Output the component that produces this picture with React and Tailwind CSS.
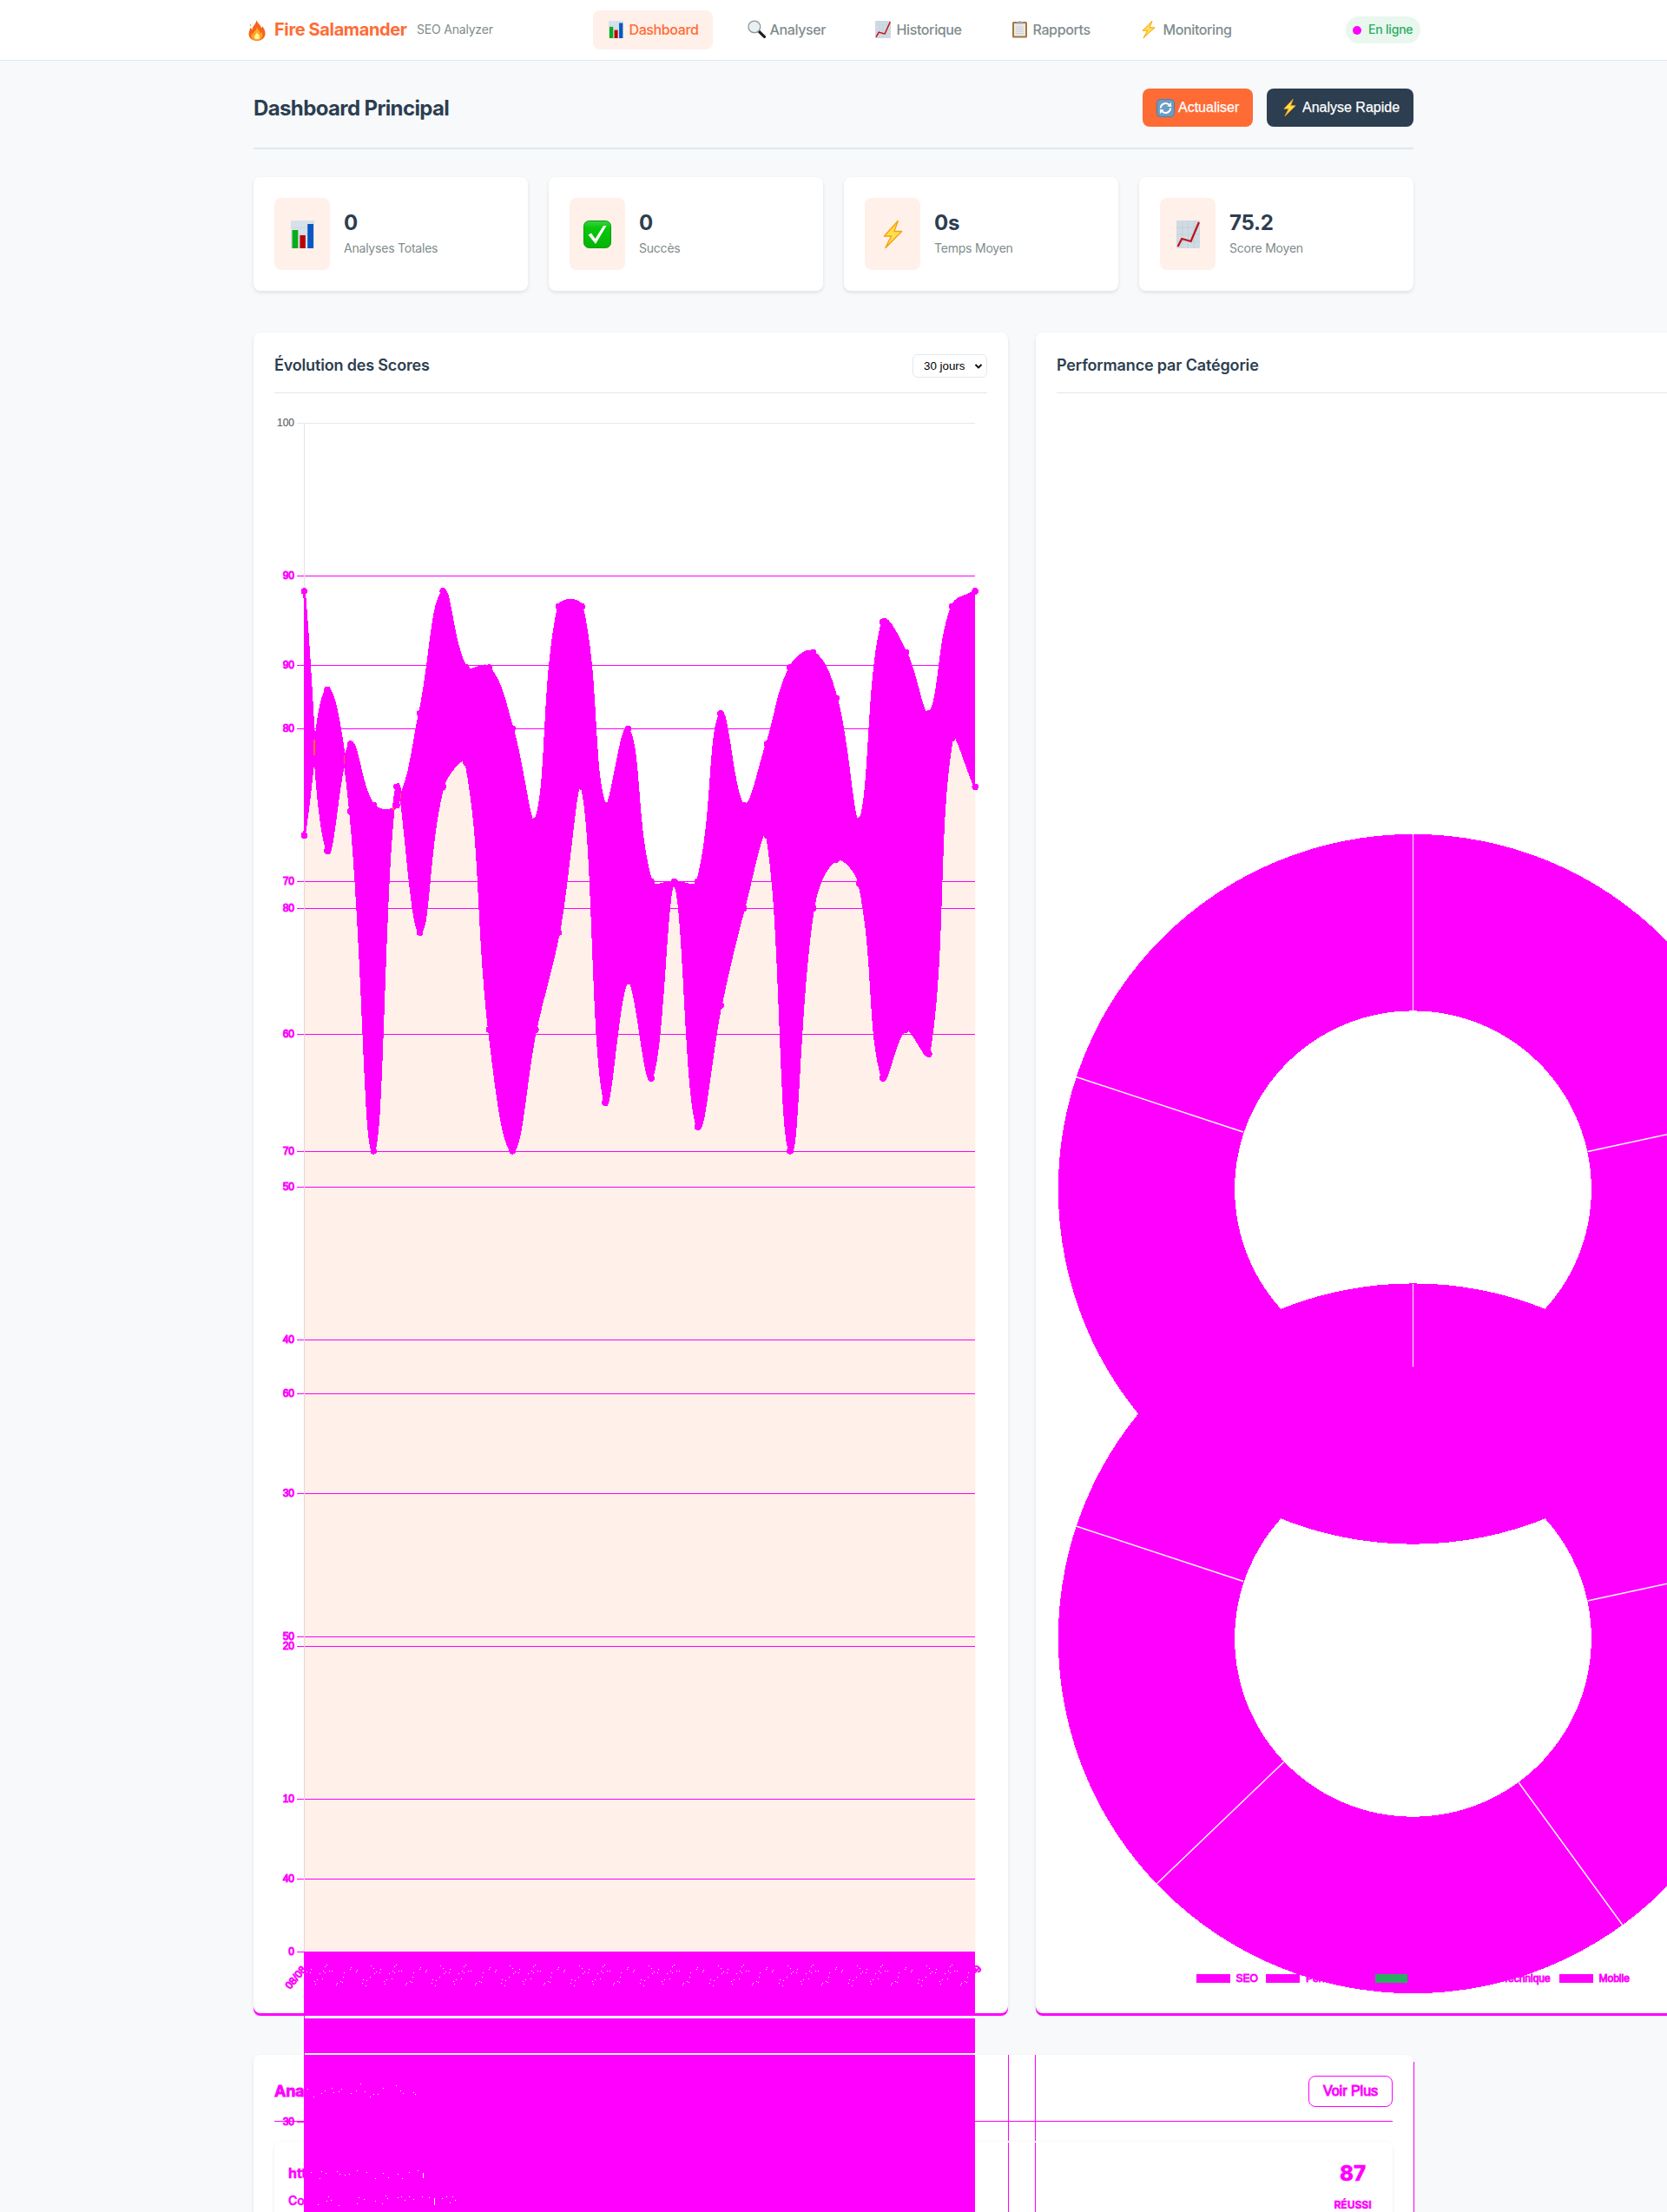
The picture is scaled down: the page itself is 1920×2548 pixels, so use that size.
import React from "react";

const M = "#ff00ff";

/* ---------- icons ---------- */
function BarsIcon({ className }) {
  return (
    <svg viewBox="0 0 26 32" preserveAspectRatio="none" className={className}>
      <rect width="26" height="32" fill="#d6e1ea" />
      <path d="M0 8h26M0 16h26M0 24h26" stroke="#c5d3de" strokeWidth="0.6" />
      <rect x="1.500" y="11" width="6.500" height="21" fill="#0bab1b" />
      <rect x="10" y="17" width="6.200" height="15" fill="#b90504" />
      <rect x="18.500" y="4" width="6.500" height="28" fill="#0a56c2" />
    </svg>
  );
}
function TrendIcon({ className }) {
  return (
    <svg viewBox="0 0 26 32" preserveAspectRatio="none" className={className}>
      <rect width="26" height="32" fill="#d0dbe3" />
      <path d="M6.500 0v32M13 0v32M19.500 0v32M0 8h26M0 16h26M0 24h26" stroke="#c0cdd7" strokeWidth="0.7" />
      <path d="M1.500 30 6 21l10 3L25 2" fill="none" stroke="#c1121a" strokeWidth="2.200" />
    </svg>
  );
}
function BoltIcon({ className }) {
  return (
    <svg viewBox="0 0 24 32" preserveAspectRatio="none" className={className}>
      <path d="M18 .5 1.500 18H10L3 31.500 22.500 12.500H13.500Z" fill="#ffe14d" stroke="#f5a013" strokeWidth="1.500" strokeLinejoin="round" />
    </svg>
  );
}
function CheckIcon({ className }) {
  return (
    <svg viewBox="0 0 32 32" className={className}>
      <defs>
        <linearGradient id="ck" x1="0" y1="0" x2="0" y2="1">
          <stop offset="0" stopColor="#3fcf4a" />
          <stop offset="0.250" stopColor="#08c90b" />
          <stop offset="1" stopColor="#05b306" />
        </linearGradient>
      </defs>
      <rect x="0.500" y="0.500" width="31" height="31" rx="6" fill="url(#ck)" stroke="#079c0c" />
      <path d="M5.500 16.500 9 14.500l4.500 6.500L23 6h3.500L14 27Z" fill="#fff" />
    </svg>
  );
}
function LensIcon({ className }) {
  return (
    <svg viewBox="0 0 20 20" className={className}>
      <path d="m12 12 6.500 6.500" stroke="#1e1e1e" strokeWidth="3" strokeLinecap="round" />
      <circle cx="7.500" cy="7.500" r="6.500" fill="#e8f0f3" stroke="#8e9598" strokeWidth="1.200" />
    </svg>
  );
}
function ClipIcon({ className }) {
  return (
    <svg viewBox="0 0 18 21" className={className}>
      <rect x="0.500" y="2" width="17" height="18.500" rx="1.500" fill="#a5763f" />
      <rect x="2.500" y="4" width="13" height="14.500" fill="#e9e9e9" />
      <path d="M4.500 8h9M4.500 10.500h9M4.500 13h9M4.500 15.500h9" stroke="#c4c4c4" strokeWidth="0.800" />
      <path d="M5 4.500V2.500h2.500a1.500 1.500 0 0 1 3 0H13v2Z" fill="#9aa3a8" />
    </svg>
  );
}
function FlameIcon({ className }) {
  return (
    <svg viewBox="0 0 20 24" className={className}>
      <path d="M9.500 0c1 4 5 5.500 5.500 9.500.5-.5 1-1.500 1-2.500 2 2.500 4 6 3.500 9.500C19 21 15 24 10 24S.5 21 .5 16.500C.5 13 2 11 2.500 9c1 .5 1.500 1.500 2 2.500C4.500 7 9 5 9.500 0Z" fill="#f7641b" />
      <path d="M10 8c.5 3 4 4.500 4 8 1-.5 1.200-1.500 1.500-2.500 2.500 5-.5 10-5.500 10S2 19.500 4 15c.5 1 1 1.500 1.500 1.500C6 13 10 12 10 8Z" fill="#ffab22" />
      <path d="M10 14c.5 2.500 3.500 3.500 3 6.500-.5 2-5.500 2-6 0-.5-3 2.500-3.500 3-6.500Z" fill="#fff3a0" />
      <circle cx="2.500" cy="6" r="0.800" fill="#f7641b" />
    </svg>
  );
}
function RefreshIcon({ className }) {
  return (
    <svg viewBox="0 0 21 21" className={className}>
      <rect x="0.500" y="0.500" width="20" height="20" rx="4" fill="#6b9cc4" stroke="#4f7fa8" />
      <g fill="none" stroke="#fff" strokeWidth="2">
        <path d="M4.800 10.500a5.700 5.700 0 0 1 9.500-4" />
        <path d="M16.200 10.500a5.700 5.700 0 0 1-9.500 4" />
      </g>
      <path d="m12.300 8.500 5 .4-.6-5ZM8.700 12.500l-5-.4.6 5Z" fill="#fff" />
    </svg>
  );
}

/* ---------- line chart ---------- */
const scoreA = [89, 72, 79, 75, 75, 81, 89, 84, 84, 80, 74, 88, 88, 75, 80, 70, 70, 70, 81, 75, 79, 84, 85, 82, 74, 87, 85, 81, 88, 89];
const scoreB = [83, 89, 84, 70, 85, 79, 85, 86, 75, 70, 75, 79, 85, 72, 77, 73, 81, 71, 76, 80, 83, 70, 80, 82, 81, 73, 75, 74, 87, 85];
const px = (i) => 350.3 + (i * 772.9) / 29;
const yA = (v) => 2248.3 - v * 17.61;
const yB = (v) => 766.5 + (90 - v) * 27.97;
const ptsA = scoreA.map((v, i) => [px(i), yA(v)]);
const ptsB = scoreB.map((v, i) => [px(i), yB(v)]);

function spline(p) {
  const t = 0.4;
  const n = p.length;
  const cps = p.map((c, i) => {
    const a = p[Math.max(0, i - 1)];
    const b = p[Math.min(n - 1, i + 1)];
    const d1 = Math.hypot(c[0] - a[0], c[1] - a[1]);
    const d2 = Math.hypot(b[0] - c[0], b[1] - c[1]);
    const fa = (t * d1) / (d1 + d2);
    const fb = (t * d2) / (d1 + d2);
    return [
      [c[0] - fa * (b[0] - a[0]), c[1] - fa * (b[1] - a[1])],
      [c[0] + fb * (b[0] - a[0]), c[1] + fb * (b[1] - a[1])],
    ];
  });
  const seg = (q) => q.map((v) => v.toFixed(2)).join(" ");
  let fwd = "";
  let back = "";
  for (let i = 1; i < n; i++) fwd += ` C${seg(cps[i - 1][1])} ${seg(cps[i][0])} ${seg(p[i])}`;
  for (let i = n - 1; i > 0; i--) back += ` C${seg(cps[i][0])} ${seg(cps[i - 1][1])} ${seg(p[i - 1])}`;
  return { fwd, back, start: seg(p[0]), end: seg(p[n - 1]) };
}
const sA = spline(ptsA);
const sB = spline(ptsB);
const areaA = `M${sA.start}${sA.fwd} V2248 H350.3Z`;
const areaB = `M${sB.start}${sB.fwd} V2248 H350.3Z`;
const between = `M${sA.start}${sA.fwd} L${sB.end}${sB.back}Z`;

const ticks = [
  [90, 663], [90, 766], [80, 839], [70, 1015], [80, 1046], [60, 1191], [70, 1326], [50, 1367],
  [40, 1543], [60, 1605], [30, 1720], [50, 1885], [20, 1896], [10, 2072], [40, 2164], [0, 2248], [30, 2444],
];
const dates = Array.from({ length: 30 }, (_, i) => {
  const d = i + 8;
  return d <= 31 ? `${String(d).padStart(2, "0")}/08` : `${String(d - 31).padStart(2, "0")}/09`;
});

const labelSpecks = [
  [[-3, 2], [0, 5], [3, 9], [8, 6], [7, 10], [1, 11], [-8, 19], [-12, 18], [-4, 15], [-9, 25], [-13, 22]],
  [[-1, 1], [-3, 3], [-5, 8], [-3, 10], [2, 8], [5, 8], [-9, 11], [-6, 17], [-12, 18], [-15, 20], [-14, 23]],
  [[0, 4], [-1, 6], [7, 7], [6, 9], [-8, 10], [-9, 15], [-12, 20], [-16, 22], [-10, 21], [-17, 24]],
];
const textSpecks = [
  [354, 2406], [361, 2415], [370, 2411], [374, 2408], [382, 2405], [384, 2410], [390, 2409], [393, 2406], [404, 2411], [410, 2408],
  [415, 2400], [420, 2409], [426, 2415], [430, 2412], [435, 2412], [441, 2405], [456, 2402], [461, 2408], [464, 2411], [476, 2410], [478, 2412],
  [358, 2502], [368, 2509], [370, 2501], [375, 2503], [388, 2501], [391, 2504], [397, 2505], [402, 2504], [411, 2500], [422, 2502],
  [432, 2509], [441, 2503], [447, 2508], [458, 2504], [463, 2509], [471, 2502], [481, 2500],
  [366, 2539], [376, 2535], [378, 2530], [381, 2534], [390, 2540], [411, 2538], [413, 2531], [419, 2533], [432, 2535], [440, 2538],
  [444, 2529], [446, 2532], [458, 2531], [462, 2530], [466, 2534], [471, 2530], [476, 2533], [486, 2530], [494, 2531], [509, 2532],
  [514, 2530], [518, 2537], [521, 2530], [524, 2534],
];

function ScoreChart() {
  return (
    <svg viewBox="316 477 821 1818" width="821" height="1818" className="relative z-10 mt-6 block overflow-visible">
      <g shapeRendering="crispEdges">
        <rect x="342" y="487" width="781" height="1" fill="#e1e8ed" />
        <rect x="350" y="487" width="1" height="1761" fill="#e5e5e5" />
      </g>
      <path d={areaA} fill="#fff0e9" />
      <path d={areaB} fill="#fff0e9" />
      <rect x="350" y="962" width="1" height="1286" fill="#e8d8d0" shapeRendering="crispEdges" />
      <g fill={M} shapeRendering="crispEdges">
        {ticks.slice(0, -1).map(([, y]) => (
          <React.Fragment key={y}>
            <rect x="342" y={y} width="8" height="1" />
            <rect x="351" y={y} width="772" height="1" />
          </React.Fragment>
        ))}
        <rect x="342" y="2443" width="8" height="2" />
      </g>
      <g fill={M} stroke={M} strokeWidth="1" fontFamily="Liberation Sans, Arial, sans-serif" fontSize="12">
        {ticks.map(([v, y]) => (
          <text key={y} x="339" y={y + 4.300} textAnchor="end">{v}</text>
        ))}
        {dates.map((d, i) => (
          <text key={d} transform={`translate(${px(i) + 3} 2269) rotate(-50)`} textAnchor="end">{d}</text>
        ))}
        <text transform="translate(1131 2268) rotate(-50)" textAnchor="end">9</text>
      </g>
      <text x="339" y="491.300" textAnchor="end" fill="#666" stroke="#666" strokeWidth="0.200" fontFamily="Liberation Sans, Arial, sans-serif" fontSize="12">100</text>

      <g shapeRendering="crispEdges">
        <path d={between} fill={M} />
        <path d={`M${sA.start}${sA.fwd}`} fill="none" stroke={M} strokeWidth="3" />
        <path d={`M${sB.start}${sB.fwd}`} fill="none" stroke={M} strokeWidth="3" />
        {[...ptsA, ...ptsB].map(([x, y], i) => (
          <circle key={i} cx={x} cy={y} r="3.800" fill={M} />
        ))}
        <g fill="#ff6b35">
          <rect x="361" y="852" width="2" height="18" />
          <rect x="396" y="870" width="1" height="10" />
          <rect x="461" y="914" width="1" height="6" />
          <rect x="452" y="930" width="2" height="3" />
        </g>
      </g>

      <g fill={M} shapeRendering="crispEdges">
        <rect x="350" y="2248" width="773" height="74" />
        <rect x="350" y="2322" width="1" height="226" />
        <rect x="350" y="2325" width="773" height="40" />
        <rect x="350" y="2367" width="773" height="181" />
        <rect x="1161" y="2367" width="1" height="76" />
        <rect x="1161" y="2444" width="1" height="22" />
        <rect x="1161" y="2468" width="1" height="80" />
        <rect x="1192" y="2367" width="1" height="76" />
        <rect x="1192" y="2444" width="1" height="22" />
        <rect x="1192" y="2468" width="1" height="80" />
        <rect x="1628" y="2375" width="1" height="173" />
      </g>
      <g fill="#fff" shapeRendering="crispEdges">
        {dates.map((d, i) =>
          labelSpecks[i % 3].map(([dx, dy], k) => {
            const x = Math.round(px(i) + dx);
            return x > 352 && x < 1121 ? <rect key={d + k} x={x} y={2262 + dy} width="1" height="1" /> : null;
          })
        )}
        {textSpecks.map(([x, y]) => (
          <rect key={`${x}-${y}`} x={x} y={y} width="1" height="1" />
        ))}
        <rect x="487" y="2503" width="1" height="6" />
        <rect x="500" y="2532" width="1" height="8" />
      </g>
    </svg>
  );
}

/* ---------- doughnut chart ---------- */
function ring(cy) {
  const c = 1627.5;
  const o = 408.7;
  const r = 205.4;
  return `M${c - o} ${cy}a${o} ${o} 0 1 1 ${2 * o} 0a${o} ${o} 0 1 1 ${-2 * o} 0Z M${c - r} ${cy}a${r} ${r} 0 1 0 ${2 * r} 0a${r} ${r} 0 1 0 ${-2 * r} 0Z`;
}
function CategoryChart() {
  return (
    <svg viewBox="1217 477 821 1818" width="821" height="1818" className="mt-6 block overflow-visible">
      <g fill={M} shapeRendering="crispEdges">
        <path d={ring(1369.8)} />
        <path d={ring(1887.3)} />
      </g>
      <g stroke="#fff" strokeWidth="1.400" fill="none">
        <path d="M1627.500 960V1165M1627.500 1479V1574.500" strokeWidth="1" />
        <path d="M1239.500 1240.500 1432 1304M1828.500 1326.500 2027 1283.500" />
        <path d="M1239.500 1758 1432 1821.500M1828.500 1844 2027 1801" />
        <path d="M1478.500 2029.800 1332.500 2169.800M1749.400 2053.500 1868.500 2217" />
      </g>
      <g fill={M} shapeRendering="crispEdges">
        <rect x="1378" y="2274" width="39" height="10" />
        <rect x="1458" y="2274" width="39" height="10" />
        <rect x="1584" y="2274" width="37" height="10" fill="#27ae60" />
        <rect x="1686" y="2274" width="39" height="10" />
        <rect x="1796" y="2274" width="39" height="10" />
      </g>
      <g fill={M} stroke={M} strokeWidth="0.900" fontFamily="Liberation Sans, Arial, sans-serif" fontSize="12">
        <text x="1423.500" y="2283.300">SEO</text>
        <text x="1504" y="2283.300">Performance</text>
        <text x="1628" y="2283.300">Contenu</text>
        <text x="1731" y="2283.300">Technique</text>
        <text x="1841.500" y="2283.300">Mobile</text>
      </g>
    </svg>
  );
}

/* ---------- page ---------- */
const nav = [
  { t: "Dashboard", w: "w-[138px]", I: BarsIcon, ic: "w-[17px] h-5 ml-0.5", active: true },
  { t: "Analyser", w: "w-[122px]", I: LensIcon, ic: "w-[21px] h-[21px]" },
  { t: "Historique", w: "w-[133px]", I: TrendIcon, ic: "w-[18px] h-5 ml-px" },
  { t: "Rapports", w: "w-[126px]", I: ClipIcon, ic: "w-[19px] h-[21px] ml-px" },
  { t: "Monitoring", w: "w-[136px]", I: BoltIcon, ic: "w-4 h-5 ml-px" },
];
const stats = [
  { v: "0", l: "Analyses Totales", I: BarsIcon, ic: "w-[27px] h-8" },
  { v: "0", l: "Succès", I: CheckIcon, ic: "w-8 h-8" },
  { v: "0s", l: "Temps Moyen", I: BoltIcon, ic: "w-[23px] h-8" },
  { v: "75.2", l: "Score Moyen", I: TrendIcon, ic: "w-[27px] h-8" },
];

export default function App() {
  return (
    <div className="h-[2548px] w-[1920px] overflow-hidden bg-[#f8f9fb] font-['Inter',sans-serif] text-[#2c3e50]">
      <header className="h-[70px] border-b border-[#e1e8ed] bg-white">
        <div className="flex h-[69px] items-center pl-[286px]">
          <FlameIcon className="h-6 w-5" />
          <span className="mb-px ml-2.5 w-[154px] whitespace-nowrap text-xl font-bold tracking-[-0.37px] text-[#ff6b35]">Fire Salamander</span>
          <span className="mb-px ml-2.5 w-[203px] whitespace-nowrap text-sm tracking-[-0.2px] text-[#7f8c8d]">SEO Analyzer</span>
          <nav className="flex gap-6">
            {nav.map(({ t, w, I, ic, active }) => (
              <div key={t} className={`flex h-[45px] items-center rounded-lg pl-4 text-base font-medium ${w} ${active ? "bg-[#fff0e9] text-[#ff6b35]" : "text-[#7f8c8d]"}`}>
                <span className="mb-0.5 flex w-[25.500px] shrink-0"><I className={ic} /></span>
                <span className="mb-px whitespace-nowrap tracking-[-0.38px]">{t}</span>
              </div>
            ))}
          </nav>
          <div className="ml-[116px] flex h-[31px] w-[86px] items-center rounded-full bg-[#e9f7ef] pl-2">
            <span className="h-2.5 w-2.5 rounded-full bg-[#ff00ff]" />
            <span className="mb-px ml-2 whitespace-nowrap text-sm font-medium tracking-[-0.2px] text-[#27ae60]">En ligne</span>
          </div>
        </div>
      </header>

      <main className="ml-[292px] w-[1336px]">
        <div className="flex h-[102px] items-start justify-between border-b-2 border-[#e1e8ed] pt-8">
          <h1 className="mt-[7px] text-2xl font-bold tracking-[-0.62px]">Dashboard Principal</h1>
          <div className="flex gap-4 font-['Liberation_Sans',Arial,sans-serif] text-base text-white [-webkit-text-stroke:0.25px_#fff]">
            <button className="flex h-11 w-[127px] items-center rounded-lg bg-[#ff6b35] pl-4">
              <RefreshIcon className="mr-1 h-[21px] w-[21px]" />Actualiser
            </button>
            <button className="flex h-11 w-[169px] items-center whitespace-nowrap rounded-lg bg-[#2c3e50] pl-[19px]">
              <BoltIcon className="mr-[7px] h-5 w-[15px]" />Analyse Rapide
            </button>
          </div>
        </div>

        <div className="mt-8 grid grid-cols-4 gap-6">
          {stats.map(({ v, l, I, ic }) => (
            <div key={l} className="flex h-[131px] rounded-lg bg-white p-6 shadow-[0_2px_4px_rgba(0,0,0,0.1)]">
              <div className="flex h-[83px] w-16 items-center justify-center rounded-lg bg-[#fff0e9]"><I className={ic} /></div>
              <div className="ml-4 pt-[13px]">
                <div className="text-2xl font-bold leading-8 tracking-[-0.3px]">{v}</div>
                <div className="mt-[3px] text-sm leading-5 tracking-[-0.22px] text-[#7f8c8d]">{l}</div>
              </div>
            </div>
          ))}
        </div>

        <div className="mt-12 flex w-[1770px] gap-8">
          <section className="h-[1936px] w-[869px] shrink-0 rounded-lg bg-white px-6 pt-6 shadow-[0_3px_0_#ff00ff,0_2px_4px_rgba(0,0,0,0.1)]">
            <div className="flex h-[46px] items-start justify-between border-b border-[#e1e8ed]">
              <h2 className="text-lg font-semibold leading-7 tracking-[-0.17px]">Évolution des Scores</h2>
              <div className="mt-px flex h-[27px] w-[86px] items-center justify-between rounded-md border border-[#e1e8ed] pl-3 pr-1 font-['Liberation_Sans',Arial,sans-serif] text-[13.333px] text-black">
                30 jours
                <svg viewBox="0 0 10 8" className="h-2 w-2.5"><path d="m1.500 2 3.500 3.500L8.500 2" fill="none" stroke="#000" strokeWidth="1.800" /></svg>
              </div>
            </div>
            <ScoreChart />
          </section>
          <section className="h-[1936px] w-[869px] shrink-0 rounded-lg bg-white px-6 pt-6 shadow-[0_3px_0_#ff00ff,0_2px_4px_rgba(0,0,0,0.1)]">
            <div className="h-[46px] border-b border-[#e1e8ed]">
              <h2 className="text-lg font-semibold leading-7 tracking-[-0.15px]">Performance par Catégorie</h2>
            </div>
            <CategoryChart />
          </section>
        </div>

        <section className="mt-12 h-[300px] rounded-lg bg-white px-6 pt-6 text-[#ff00ff] shadow-[0_2px_4px_rgba(0,0,0,0.1)]">
          <div className="flex h-[53px] items-start justify-between border-b border-[#ff00ff]">
            <h2 className="mt-1 text-lg font-bold leading-7 tracking-[-0.3px] [-webkit-text-stroke:0.8px_#ff00ff]">Analyses Récentes</h2>
            <button className="h-9 w-[97px] rounded-lg border border-[#ff00ff] font-['Liberation_Sans',Arial,sans-serif] text-base [-webkit-text-stroke:1px_#ff00ff]">Voir Plus</button>
          </div>
          <div className="mt-[23px] flex h-[200px] justify-between rounded-lg bg-white pl-4 pr-6 pt-5 shadow-[0_1px_4px_rgba(0,0,0,0.08)]">
            <div>
              <div className="mt-1 text-base font-bold leading-6 [-webkit-text-stroke:0.5px_#ff00ff]">https://example.com</div>
              <div className="mt-2 text-sm font-medium leading-6 [-webkit-text-stroke:0.6px_#ff00ff]">Complète</div>
            </div>
            <div className="flex w-11 flex-col items-center [-webkit-text-stroke:0.5px_#ff00ff]">
              <div className="mt-px text-2xl font-extrabold leading-8">87</div>
              <div className="mt-3 text-xs font-bold leading-4">RÉUSSI</div>
            </div>
          </div>
        </section>
      </main>
    </div>
  );
}
